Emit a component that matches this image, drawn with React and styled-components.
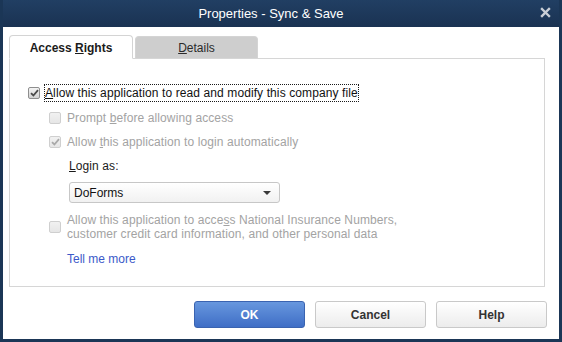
import styled, { createGlobalStyle } from "styled-components";

const Global = createGlobalStyle`
  html, body {
    margin: 0;
    padding: 0;
    background: #ffffff;
  }
  body {
    font-family: "Liberation Sans", Arial, sans-serif;
  }
`;

const Dialog = () => {
  return (
    <Window>
      <TitleBar>
        <Title>Properties - Sync &amp; Save</Title>
        <CloseBtn>
          <svg width="11" height="11" viewBox="0 0 11 11">
            <path
              d="M2 2 L9 9 M9 2 L2 9"
              stroke="#c9ced6"
              strokeWidth="2.4"
              strokeLinecap="square"
            />
          </svg>
        </CloseBtn>
      </TitleBar>
      <Body>
        <Tabs>
          <Tab active>
            {"Access "}
            <u>R</u>
            {"ights"}
          </Tab>
          <Tab>
            <u>D</u>
            {"etails"}
          </Tab>
        </Tabs>
        <Panel>
          <Row>
            <Check checked />
            <FocusLabel>
              <u>A</u>
              {"llow this application to read and modify this company file"}
            </FocusLabel>
          </Row>
          <Row indent>
            <Check disabled />
            <Label disabled>
              {"Prompt "}
              <u>b</u>
              {"efore allowing access"}
            </Label>
          </Row>
          <Row indent>
            <Check checked disabled />
            <Label disabled>
              {"Allow "}
              <u>t</u>
              {"his application to login automatically"}
            </Label>
          </Row>
          <LoginBlock>
            <Label>
              <u>L</u>
              {"ogin as:"}
            </Label>
            <Select>
              <span>DoForms</span>
              <svg width="8" height="4" viewBox="0 0 8 4">
                <path d="M0 0 H8 L4 4 Z" fill="#3a3a3a" />
              </svg>
            </Select>
          </LoginBlock>
          <Row indent>
            <Check disabled />
            <Label disabled>
              {"Allow this application to acce"}
              <u>s</u>
              {"s National Insurance Numbers,"}
              <br />
              {"customer credit card information, and other personal data"}
            </Label>
          </Row>
          <Link>Tell me more</Link>
        </Panel>
        <Buttons>
          <Button primary>OK</Button>
          <Button>Cancel</Button>
          <Button>Help</Button>
        </Buttons>
      </Body>
    </Window>
  );
};

const Check = ({ checked, disabled }) => (
  <Box checked={checked} disabled={disabled}>
    {checked && (
      <svg width="9" height="8" viewBox="0 0 9 8">
        <path
          d="M1 4.2 L3.4 6.5 L8 1.2"
          fill="none"
          stroke={disabled ? "#a9a9a9" : "#4a4a4a"}
          strokeWidth="1.8"
        />
      </svg>
    )}
  </Box>
);

const Window = styled.div`
  width: 562px;
  height: 342px;
  box-sizing: border-box;
  background: #1b3656;
  padding: 0 3px 3px 3px;
  display: flex;
  flex-direction: column;
`;

const TitleBar = styled.div`
  height: 27px;
  flex: none;
  display: flex;
  align-items: center;
  justify-content: center;
  position: relative;
  background: linear-gradient(#213f63, #1a3252);
  padding-right: 20px;
`;

const Title = styled.div`
  color: #ffffff;
  font-size: 13px;
`;

const CloseBtn = styled.div`
  position: absolute;
  right: 8px;
  top: 7px;
  width: 11px;
  height: 11px;
  display: flex;
`;

const Body = styled.div`
  flex: 1;
  background: #ffffff;
  display: flex;
  flex-direction: column;
  padding: 8px 14px 11px 6px;
`;

const Tabs = styled.div`
  display: flex;
  align-items: flex-end;
  gap: 2px;
  height: 23px;
  position: relative;
  z-index: 1;
`;

const Tab = styled.div`
  box-sizing: border-box;
  width: ${(p) => (p.active ? "124px" : "123px")};
  height: ${(p) => (p.active ? "24px" : "22px")};
  margin-bottom: ${(p) => (p.active ? "-1px" : "0")};
  border: 1px solid #d4d4d4;
  border-bottom: ${(p) => (p.active ? "1px solid #ffffff" : "none")};
  border-radius: 4px 4px 0 0;
  background: ${(p) => (p.active ? "#ffffff" : "#cecece")};
  color: ${(p) => (p.active ? "#1b1b1b" : "#2a2a2a")};
  font-size: 12px;
  font-weight: ${(p) => (p.active ? "bold" : "normal")};
  white-space: pre;
  display: flex;
  align-items: center;
  justify-content: center;
  padding-top: 1px;
`;

const Panel = styled.div`
  box-sizing: border-box;
  height: 229px;
  border: 1px solid #d6d6d6;
  padding: 26px 0 0 18px;
  display: flex;
  flex-direction: column;
`;

const Row = styled.div`
  display: flex;
  align-items: center;
  gap: 6px;
  padding-left: ${(p) => (p.indent ? "21px" : "0")};
  margin-bottom: 10px;
`;

const Box = styled.span`
  box-sizing: border-box;
  width: 12px;
  height: 12px;
  flex: none;
  border-radius: 2px;
  border: 1px solid ${(p) => (p.disabled ? "#cfcfcf" : "#8e8e8e")};
  background: ${(p) =>
    p.disabled
      ? "linear-gradient(#f1f1f1, #e6e6e6)"
      : "linear-gradient(#f4f4f4, #d2d2d2)"};
  display: flex;
  align-items: center;
  justify-content: center;
`;

const Label = styled.span`
  font-size: 12px;
  line-height: 14px;
  letter-spacing: 0.1px;
  color: ${(p) => (p.disabled ? "#a3a3a3" : "#1a1a1a")};
`;

const FocusLabel = styled(Label)`
  outline: 1px dotted #1a1a1a;
  outline-offset: 0;
  padding: 1px 0 1px 0;
  margin-left: -1px;
  color: #111;
`;

const LoginBlock = styled.div`
  display: flex;
  flex-direction: column;
  gap: 9px;
  padding-left: 41px;
  margin: 0 0 10px;
`;

const Select = styled.div`
  box-sizing: border-box;
  width: 211px;
  height: 21px;
  border: 1px solid #c7c7c7;
  border-radius: 3px;
  background: linear-gradient(#ffffff, #f1f1f1);
  display: flex;
  align-items: center;
  justify-content: space-between;
  padding: 0 8px 0 4px;
  font-size: 12px;
  color: #111;
`;

const Link = styled.a`
  font-size: 12px;
  color: #3b59c9;
  padding-left: 39px;
  margin-top: 1px;
  cursor: pointer;
`;

const Buttons = styled.div`
  display: flex;
  justify-content: flex-end;
  gap: 10px;
  margin-top: auto;
  margin-right: -2px;
`;

const Button = styled.button`
  box-sizing: border-box;
  width: 111px;
  height: 27px;
  border-radius: 3px;
  font-family: "Liberation Sans", Arial, sans-serif;
  font-size: 12px;
  font-weight: bold;
  border: 1px solid ${(p) => (p.primary ? "#3a63b0" : "#c9c9c9")};
  background: ${(p) =>
    p.primary
      ? "linear-gradient(#6797de, #3f6ec6)"
      : "linear-gradient(#ffffff, #ececec)"};
  color: ${(p) => (p.primary ? "#ffffff" : "#333333")};
  padding: 0;
`;

export default function App() {
  return (
    <>
      <Global />
      <Dialog />
    </>
  );
}
